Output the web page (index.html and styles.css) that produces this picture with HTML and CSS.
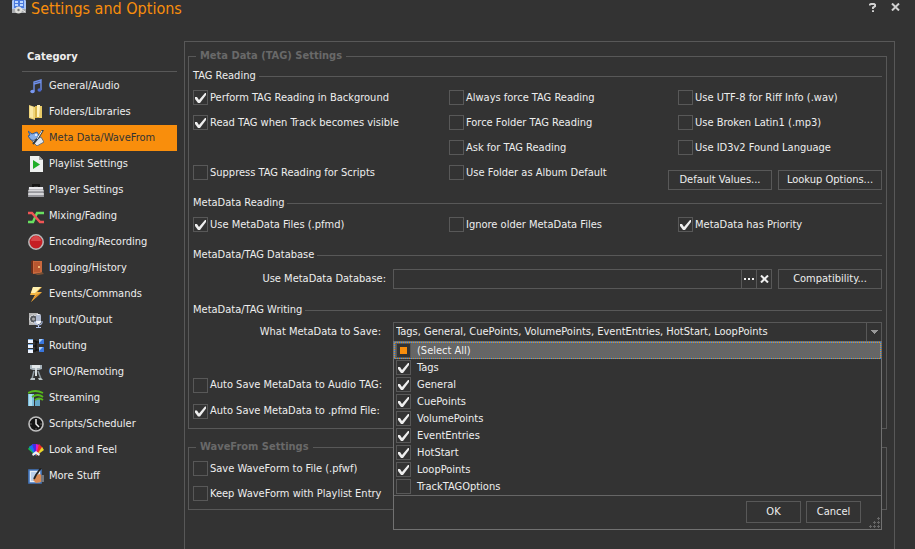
FILE: index.html
```html
<!DOCTYPE html>
<html lang="en">
<head>
  <meta charset="UTF-8">
  <meta name="viewport" content="width=device-width, initial-scale=1.0">
  <title>Settings and Options</title>
  <link rel="stylesheet" href="styles.css">
</head>
<body>
  <header class="titlebar">
    <svg class="app-icon" width="14" height="14" viewBox="0 0 14 14"><rect width="14" height="13" rx="1" fill="#a9c4f5"/><path d="M2 0h10v8H2z" fill="#4a79dd"/><path d="M3 1h3v2H3zM8 1h3v2H8zM3 4h3v2H3zM8 4h3v2H8z" fill="#bcd6ff"/><path d="M0 9h14v4H0z" fill="#a8aaad"/><circle cx="6.500" cy="10" r="3.500" fill="#e0e0dc"/><circle cx="6.500" cy="10" r="1.200" fill="#777"/><path d="M9 9l4 3" stroke="#eee"/></svg>
    <h1>Settings and Options</h1>
    <button class="win-btn" aria-label="Help"><svg width="7" height="9" viewBox="0 0 7 9"><path d="M1 2.5V1.6L2 1h3l1 .8v1.400L4 4.600V6M4 7.200V9" fill="none" stroke="#d0d0d0" stroke-width="2"/></svg></button>
    <button class="win-btn" aria-label="Close"><svg width="9" height="8" viewBox="0 0 9 8"><path d="M1 .5l7 7M8 .5l-7 7" stroke="#d0d0d0" stroke-width="2"/></svg></button>
  </header>

  <div class="layout">
    <nav class="sidebar">
      <h2>Category</h2>
      <a href="#general"><svg viewBox="0 0 16 16"><path d="M6 13V4l7-2v10M6 6l7-2" fill="none" stroke="#6f8fea" stroke-width="1.4"/><ellipse cx="4.5" cy="13.5" rx="2.2" ry="1.8" fill="#7898f0"/><ellipse cx="11.5" cy="12" rx="2" ry="1.8" fill="#4a68d0"/></svg>General/Audio</a>
      <a href="#folders"><svg viewBox="0 0 16 16"><path d="M7 2h7v12H7z" fill="#d9b548"/><path d="M9 1h3v12H9z" fill="#fff2bd"/><path d="M1 1l6 2v13l-6-2z" fill="#f0d57a"/><path d="M2 2l3 1v11l-3-1z" fill="#fae9a5"/><path d="M12 2h2v12h-3z" fill="#e8ca66"/></svg>Folders/Libraries</a>
      <a href="#metadata" class="active"><svg viewBox="0 0 16 16"><path d="M0 1l4 3 5-2 3 5-4 4-5-1-3-4 2-1z" fill="#86aee8" stroke="#315a94"/><circle cx="8" cy="5" r="1" fill="#fff"/><path d="M4 11l9-4 3 5-7 4z" fill="#e3e8ee" stroke="#66707c"/><path d="M15 0l-5 8-5 6" fill="none" stroke="#303d49" stroke-width="2"/><path d="M14 1L9 9" stroke="#f4f4f4"/></svg>Meta Data/WaveFrom</a>
      <a href="#playlist"><svg viewBox="0 0 16 16"><path d="M2 0h9l4 4v12H2z" fill="#eef0ef"/><path d="M11 0v4h4z" fill="#aaa"/><path d="M5 4l7 4.5L5 13z" fill="#20ae28"/></svg>Playlist Settings</a>
      <a href="#player"><svg viewBox="0 0 16 16"><path d="M5 5V3h6v2" fill="none" stroke="#151515" stroke-width="2"/><path d="M1 5h14l1 10H0z" fill="#b8b8bd"/><path d="M1 5h14v2H1z" fill="#e8e8ec"/><path d="M0 9h16M0 12h16" stroke="#f4f4f4"/><path d="M0 10h16M0 14h16" stroke="#77777d"/></svg>Player Settings</a>
      <a href="#mixing"><svg viewBox="0 0 16 16"><path d="M0 14h5l4-9h7" fill="none" stroke="#68e060" stroke-width="2.4"/><path d="M0 5h4l8 9h4" fill="none" stroke="#f05555" stroke-width="2.4"/></svg>Mixing/Fading</a>
      <a href="#encoding"><svg viewBox="0 0 16 16"><circle cx="8" cy="8" r="7.2" fill="#c51f24" stroke="#b9b9b9" stroke-width="1.5"/><path d="M3 7a5 5 0 0 1 10 0z" fill="#d9474a"/></svg>Encoding/Recording</a>
      <a href="#logging"><svg viewBox="0 0 16 16"><path d="M3 1l3-1v14l-3-1z" fill="#6b2d18"/><path d="M5 1h9v12l-9 1z" fill="#c9683d"/><path d="M6 2h6v10H6z" fill="#b85730"/><circle cx="11" cy="7" r="1" fill="#ffd38b"/><path d="M7 15l7-3 2 2-5 1z" fill="#7a5034"/></svg>Logging/History</a>
      <a href="#events"><svg viewBox="0 0 16 16"><path d="M5 1h9L9 6h5L3 16l4-7H2z" fill="#f3b746"/><path d="M5 1h8L7 7H3z" fill="#fff0b0"/><path d="M14 6L3 16l5-7z" fill="#dc8d27"/></svg>Events/Commands</a>
      <a href="#io"><svg viewBox="0 0 16 16"><path d="M1 1h9v12H1z" fill="#b4b4b4"/><circle cx="5.5" cy="7" r="4" fill="#55585d" stroke="#e0e0e0"/><circle cx="5.5" cy="7" r="1.5" fill="#aaa"/><rect x="8" y="2" width="5" height="10" rx="2" fill="#f2f5fb"/><path d="M8 4h5M8 6h5M8 8h5" stroke="#7283a8"/><path d="M7 9v2q0 2 3.500 2t3.500-2V9M10.500 13v3M8 15.500h5" fill="none" stroke="#b5c7ef"/></svg>Input/Output</a>
      <a href="#routing"><svg viewBox="0 0 16 16"><path d="M5 3h3v10H5M5 8h3M8 4h4M8 12h4" fill="none" stroke="#080808"/><path d="M0 1h5v4H0zM0 6h5v4H0zM0 11h5v4H0z" fill="#edf4ff"/><path d="M0 1h5v1H0zM0 6h5v1H0zM0 11h5v1H0z" fill="#79aee6"/><path d="M11 1h5v5h-5zM11 9h5v5h-5z" fill="#3976dd"/><path d="M11 1h4l-4 4zM11 9h4l-4 4z" fill="#a9d0ff"/></svg>Routing</a>
      <a href="#gpio"><svg viewBox="0 0 16 16"><path d="M2 1h12v4l-3 1H5L2 5z" fill="#a7b3bb"/><path d="M4 1h8v3H4z" fill="#e2e7e9"/><path d="M7 4h2v8H7z" fill="#d7dde0"/><path d="M6 7L4 15M10 7l3 8" stroke="#8c989f" stroke-width="1.5"/><path d="M3 14h4v2H2zM10 14h3l2 2h-4z" fill="#bec7cb"/></svg>GPIO/Remoting</a>
      <a href="#streaming"><svg viewBox="0 0 16 16"><path d="M0 4h6v12H0z" fill="#7bbddb"/><path d="M1 4h3v12H1z" fill="#acdcf0"/><path d="M7 9h5v7H7z" fill="#65a9c9"/><path d="M0 3q7-4 15 0M4 7q6-4 11 0M7 10q4-3 8 0" fill="none" stroke="#57b91c" stroke-width="1.8"/></svg>Streaming</a>
      <a href="#scripts"><svg viewBox="0 0 16 16"><circle cx="8" cy="8" r="7" fill="#151515" stroke="#c0c0c0" stroke-width="1.6"/><path d="M8 3v5l3 3" fill="none" stroke="#f0f0f0" stroke-width="1.5"/><path d="M2.500 8h1M12.500 8h1M8 12.500v1" stroke="#aaa"/></svg>Scripts/Scheduler</a>
      <a href="#look"><svg viewBox="0 0 16 16"><path d="M8 14L0 7l2-3z" fill="#17b84b"/><path d="M8 14L1 5l4-3z" fill="#1775ef"/><path d="M8 14L4 2h4z" fill="#482be5"/><path d="M8 14V2l4 1z" fill="#e41bc1"/><path d="M8 14l3-12 4 4z" fill="#f02c24"/><path d="M8 14l6-9 2 3z" fill="#e9d62c"/><path d="M4 12l4-3 4 3-1 2-3-2-3 2z" fill="#eee"/></svg>Look and Feel</a>
      <a href="#more"><svg viewBox="0 0 16 16"><path d="M1 2h12v13H1z" fill="#e7edf5" stroke="#4477bf" stroke-width="1.6"/><path d="M3 4h8v9H3z" fill="#b9cee9"/><path d="M5 12l3-5 4-1 4 3-3 5-5 1z" fill="#d98953"/><path d="M13 0L8 7l-2 4" fill="none" stroke="#222" stroke-width="1.8"/><path d="M13 7h3v7h-3z" fill="#73777d"/></svg>More Stuff</a>
    </nav>

    <main class="panel">
      <fieldset class="group">
        <legend>Meta Data (TAG) Settings</legend>

        <h3 class="section">TAG Reading</h3>
        <div class="options tag-options">
          <label class="check"><input type="checkbox" checked>Perform TAG Reading in Background</label>
          <label class="check"><input type="checkbox">Always force TAG Reading</label>
          <label class="check"><input type="checkbox">Use UTF-8 for Riff Info (.wav)</label>
          <label class="check"><input type="checkbox" checked>Read TAG when Track becomes visible</label>
          <label class="check"><input type="checkbox">Force Folder TAG Reading</label>
          <label class="check"><input type="checkbox">Use Broken Latin1 (.mp3)</label>
          <label class="check second-col"><input type="checkbox">Ask for TAG Reading</label>
          <label class="check"><input type="checkbox">Use ID3v2 Found Language</label>
          <label class="check"><input type="checkbox">Suppress TAG Reading for Scripts</label>
          <label class="check"><input type="checkbox">Use Folder as Album Default</label>
          <div class="buttons">
            <button class="btn">Default Values...</button>
            <button class="btn">Lookup Options...</button>
          </div>
        </div>

        <h3 class="section reading">MetaData Reading</h3>
        <div class="options">
          <label class="check"><input type="checkbox" checked>Use MetaData Files (.pfmd)</label>
          <label class="check"><input type="checkbox">Ignore older MetaData Files</label>
          <label class="check"><input type="checkbox" checked>MetaData has Priority</label>
        </div>

        <h3 class="section database">MetaData/TAG Database</h3>
        <div class="form-row db-row">
          <label for="database">Use MetaData Database:</label>
          <div class="field">
            <input type="text" id="database">
            <button aria-label="Browse"><svg width="11" height="3" viewBox="0 0 11 3"><path d="M0 0h2v2H0zM4 0h2v2H4zM8 0h2v2H8z" fill="#eee"/></svg></button>
            <button aria-label="Clear"><svg width="9" height="8" viewBox="0 0 9 8"><path d="M1 .5l7 7M8 .5l-7 7" stroke="#eee" stroke-width="2"/></svg></button>
          </div>
          <button class="btn">Compatibility...</button>
        </div>

        <h3 class="section writing">MetaData/TAG Writing</h3>
        <div class="form-row save-row">
          <label for="save">What MetaData to Save:</label>
          <div class="combo">
            <select id="save">
              <option>Tags, General, CuePoints, VolumePoints, EventEntries, HotStart, LoopPoints</option>
            </select>
            <div class="popup">
              <label class="check item selected"><input type="checkbox" class="partial">(Select All)</label>
              <label class="check item"><input type="checkbox" checked>Tags</label>
              <label class="check item"><input type="checkbox" checked>General</label>
              <label class="check item"><input type="checkbox" checked>CuePoints</label>
              <label class="check item"><input type="checkbox" checked>VolumePoints</label>
              <label class="check item"><input type="checkbox" checked>EventEntries</label>
              <label class="check item"><input type="checkbox" checked>HotStart</label>
              <label class="check item"><input type="checkbox" checked>LoopPoints</label>
              <label class="check item"><input type="checkbox">TrackTAGOptions</label>
              <div class="popup-footer">
                <button class="btn">OK</button>
                <button class="btn">Cancel</button>
                <svg class="grip" width="11" height="11" viewBox="0 0 11 11"><path d="M8 1.500h3M9.500 0v3M4 5.500h3M5.500 4v3M8 5.500h3M9.500 4v3M0 9.500h3M1.500 8v3M4 9.500h3M5.500 8v3M8 9.500h3M9.500 8v3" stroke="#666"/></svg>
              </div>
            </div>
          </div>
        </div>

        <div class="auto-save">
          <label class="check"><input type="checkbox">Auto Save MetaData to Audio TAG:</label>
          <label class="check"><input type="checkbox" checked>Auto Save MetaData to .pfmd File:</label>
        </div>
      </fieldset>

      <fieldset class="group wave">
        <legend>WaveFrom Settings</legend>
        <label class="check"><input type="checkbox">Save WaveForm to File (.pfwf)</label>
        <label class="check"><input type="checkbox">Keep WaveForm with Playlist Entry</label>
      </fieldset>
    </main>
  </div>
</body>
</html>
```
FILE: styles.css
```css
* { box-sizing: border-box; }
body { margin: 0; height: 100vh; overflow: hidden; display: flex; flex-direction: column; background: #333; color: #eee; font: 11px/14px "DejaVu Sans Condensed", "Noto Sans", sans-serif; }
h1, h2, h3 { margin: 0; font-weight: normal; }
button, input, select { font: inherit; color: inherit; margin: 0; }
button { background: none; border: none; padding: 0; }

.titlebar { display: flex; align-items: flex-start; height: 41px; padding: 0 13px 0 12px; }
.titlebar h1 { flex: 1; margin-left: 5px; font-size: 16px; line-height: 17px; color: #f98e0c; }
.win-btn { width: 14px; height: 14px; display: flex; align-items: center; justify-content: center; }
.win-btn + .win-btn { margin-left: 9px; }

.layout { flex: 1; display: flex; min-height: 0; padding: 0 20px 0 22px; }
.sidebar { width: 155px; margin-right: 7px; flex: none; }
.sidebar h2 { height: 31px; margin-bottom: 1px; padding: 9px 5px 0; border-bottom: 1px solid #585858; font-size: 11px; line-height: 14px; font-weight: bold; }
.sidebar a { display: flex; align-items: center; height: 26px; padding-left: 6px; gap: 5px; color: #eee; text-decoration: none; line-height: 16px; white-space: nowrap; }
.sidebar a.active { background: #f98e0c; color: #333; }
.sidebar svg { width: 16px; height: 16px; flex: none; }

.panel { flex: 1; min-width: 0; border: 1px solid #585858; border-bottom: none; padding: 7px 7px 0 3px; }
.group { margin: 0; min-width: 0; border: 1px solid #585858; padding: 6px 4px 4px; }
.group legend { margin-left: 3px; padding: 0 4px; color: #696969; font-weight: bold; }
.section { display: flex; align-items: center; gap: 3px; font-size: 11px; line-height: 14px; }
.section::after { content: ""; flex: 1; height: 1px; background: #585858; }
.reading { margin-top: 6px; }
.database { margin-top: 11px; }
.writing { margin-top: 14px; }

.options { display: grid; grid-template-columns: minmax(0, 256fr) minmax(0, 229fr) minmax(0, 204fr); margin-top: 2px; }
.tag-options { grid-template-rows: 25px 25px 25px 30px; }
.second-col { grid-column: 2; }
.buttons { display: flex; align-items: flex-end; justify-content: flex-end; gap: 6px; }
.check { display: flex; align-items: center; gap: 2px; height: 25px; white-space: nowrap; }
.check input { appearance: none; width: 15px; height: 15px; flex: none; border: 1px solid #585858; background: #333; }
.check input:checked::before { content: ""; display: block; width: 13px; height: 13px; background: #eee; clip-path: polygon(1px 6px, 3px 6px, 5px 9px, 11px 2px, 12px 2px, 12px 4px, 6px 12px, 4px 12px, 1px 8px); }
.check .partial::before { content: ""; display: block; width: 7px; height: 7px; margin: 3px; background: #f98e0c; }

.btn { flex: none; width: 104px; height: 20px; border: 1px solid #585858; line-height: 14px; }
.form-row { display: grid; grid-template-columns: 200px 1fr; align-items: center; }
.form-row > label { text-align: right; padding-right: 7px; }
.db-row { grid-template-columns: 200px 1fr 110px; margin-top: 7px; }
.db-row .btn { justify-self: end; }
.save-row { margin-top: 5px; }
.save-row > label { padding-right: 12px; }
.field { display: flex; height: 20px; border: 1px solid #585858; }
.field input { flex: 1; min-width: 0; border: none; background: none; padding: 0 3px; }
.field button { width: 15px; border-left: 1px solid #585858; display: flex; align-items: center; justify-content: center; }

.combo { position: relative; height: 20px; }
.combo select { appearance: none; display: block; width: 100%; height: 20px; border: 1px solid #585858; border-radius: 0; background: #333; padding: 0 18px 0 2px; }
.combo::after { content: ""; position: absolute; top: 1px; right: 1px; width: 14px; height: 18px; border-left: 1px solid #585858; background: conic-gradient(from -45deg at 50% 100%, #999 90deg, transparent 0) center / 7px 4px no-repeat; pointer-events: none; }
.popup { position: absolute; top: 19px; left: 0; right: 0; z-index: 1; border: 1px solid #717171; background: #333; }
.item { height: 17px; padding-left: 2px; gap: 6px; }
.item.selected { padding-left: 1px; border: 1px solid transparent; background: linear-gradient(#666, #666) padding-box, repeating-conic-gradient(#f98e0c 0 25%, #1688ff 0 50%) 0 0 / 2px 2px border-box; }
.popup-footer { position: relative; display: flex; gap: 5px; justify-content: flex-end; border-top: 1px solid #666; padding: 5px 20px 6px; }
.popup-footer .btn { width: 55px; height: 22px; }
.grip { position: absolute; right: 1px; bottom: 1px; }

.auto-save { margin-top: 30px; }
.auto-save .check { height: 26px; }
.wave { margin-top: 11px; padding-top: 2px; padding-bottom: 3px; }
```
